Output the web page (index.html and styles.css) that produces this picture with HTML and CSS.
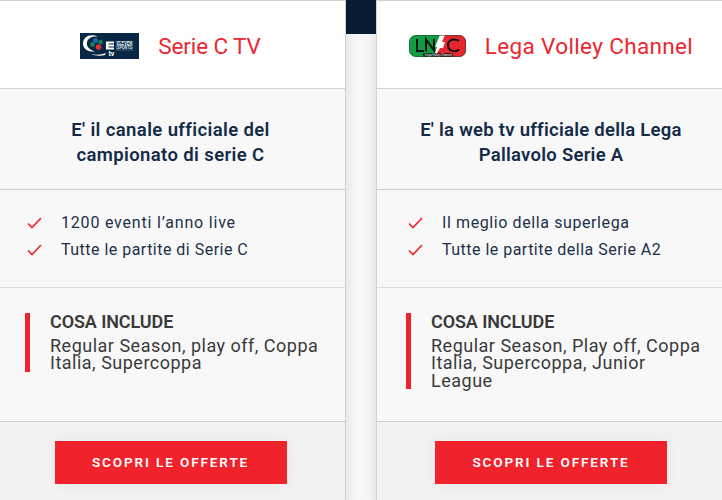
FILE: index.html
```html
<!DOCTYPE html>
<html lang="it">
<head>
  <meta charset="UTF-8">
  <meta name="viewport" content="width=device-width, initial-scale=1.0">
  <title>Offerte</title>
  <link rel="stylesheet" href="styles.css">
</head>
<body>
  <div class="cards">
    <div class="card">
      <div class="card-header">
        <svg class="logo-eleven" width="59" height="26" viewBox="0 0 59 26">
          <rect width="59" height="26" fill="#082744"/>
          <path d="M18 3.500C10 0 3 4 3 10.500c0 5 4 8.500 12 8C9 16.500 6 13 7 9c1-4 5-6 11-5.500z" fill="#fff"/>
          <path d="M11 21c5 1 10 1 15-1l-1 2c-4 1-10 1-14-1z" fill="#fff"/>
          <circle cx="12.500" cy="11.500" r="2.400" fill="#168553"/>
          <circle cx="15.500" cy="7.500" r="2.500" fill="#2467b1"/>
          <circle cx="20.500" cy="9" r="2.200" fill="#168553"/>
          <circle cx="18.500" cy="14" r="2.800" fill="#e52f3c"/>
          <path d="M26 8.500h8v8h-8z" fill="#fff"/>
          <path d="M28.500 11h5.500M28.500 14h5.500" stroke="#082744" stroke-width="1.200"/>
          <rect x="36.500" y="8.500" width="16" height="8.500" fill="none" stroke="#8798a8" stroke-width=".5"/>
          <text x="37" y="12.300" class="logo-small" textLength="15" lengthAdjust="spacingAndGlyphs">ELEVEN</text>
          <text x="37" y="16.300" class="logo-small" textLength="15" lengthAdjust="spacingAndGlyphs">SPORTS</text>
          <text x="28.500" y="23" class="logo-tv">tv</text>
        </svg>
        <h2>Serie C TV</h2>
      </div>
      <div class="card-title">
        <h3>E' il canale ufficiale del<br>campionato di serie C</h3>
      </div>
      <ul class="features">
        <li><svg width="15" height="12" viewBox="0 0 15 12"><path d="M1 6.500l4 4L14 1"/></svg><span class="events">1200 eventi l’anno live</span></li>
        <li><svg width="15" height="12" viewBox="0 0 15 12"><path d="M1 6.500l4 4L14 1"/></svg><span>Tutte le partite di Serie C</span></li>
      </ul>
      <div class="include">
        <div class="include-box">
          <h4>COSA INCLUDE</h4>
          <p>Regular Season, play off, Coppa<br>Italia, Supercoppa</p>
        </div>
      </div>
      <div class="card-footer">
        <a class="btn">SCOPRI LE OFFERTE</a>
      </div>
    </div>

    <div class="card volley">
      <div class="card-header">
        <svg class="logo-volley" width="57" height="22" viewBox="0 0 57 22">
          <defs>
            <clipPath id="pill"><rect width="57" height="22" rx="7"/></clipPath>
          </defs>
          <g clip-path="url(#pill)">
            <rect width="57" height="22" fill="#149b45"/>
            <path d="M33 0h24v22H26z" fill="#e7252e"/>
            <path d="M31 0h5l-3 7h3l-2 6h-3l-3 5h-2l2-6h-2z" fill="#fff"/>
            <path d="M14 18h30v4H14z" fill="#111" opacity=".75"/>
            <rect x=".5" y=".5" width="56" height="21" rx="6.500" fill="none" stroke="#174725" opacity=".5"/>
          </g>
          <path d="M8 4v12h7M17 16.500V4.500l8 11V4M50 6c-3-2.500-11-2.500-11 4.200s8 7 11 4.300" fill="none" stroke="#111" stroke-width="2"/>
          <text x="16" y="20.800" class="logo-caption" textLength="27" lengthAdjust="spacingAndGlyphs">Lega Volley Channel</text>
        </svg>
        <h2>Lega Volley Channel</h2>
      </div>
      <div class="card-title">
        <h3>E' la web tv ufficiale della Lega<br>Pallavolo Serie A</h3>
      </div>
      <ul class="features">
        <li><svg width="15" height="12" viewBox="0 0 15 12"><path d="M1 6.500l4 4L14 1"/></svg><span class="best">Il meglio della superlega</span></li>
        <li><svg width="15" height="12" viewBox="0 0 15 12"><path d="M1 6.500l4 4L14 1"/></svg><span>Tutte le partite della Serie A2</span></li>
      </ul>
      <div class="include">
        <div class="include-box">
          <h4>COSA INCLUDE</h4>
          <p>Regular Season, Play off, Coppa<br>Italia, Supercoppa, Junior<br>League</p>
        </div>
      </div>
      <div class="card-footer">
        <a class="btn">SCOPRI LE OFFERTE</a>
      </div>
    </div>
  </div>
</body>
</html>
```
FILE: styles.css
```css
* {
  box-sizing: border-box;
}

body {
  margin: 0;
  height: 500px;
  overflow: hidden;
  background: linear-gradient(#0a1c32 34px, #f7f7f7 34px);
  font-family: Roboto, "Noto Sans", sans-serif;
  color: #3a3a3a;
}

h2, h3, h4, p, ul {
  margin: 0;
  padding: 0;
}

.cards {
  display: grid;
  grid-template-columns: 351px 350px;
  gap: 30px;
  margin-left: -5px;
}

.card {
  height: 510px;
  background: #f8f8f8;
  border: 1px solid #d2d2d2;
  box-shadow: 0 0 12px rgba(0, 0, 0, 0.12);
  white-space: nowrap;
}

.card-header {
  height: 88px;
  display: flex;
  align-items: center;
  justify-content: center;
  gap: 19px;
  padding-top: 3px;
  background: #fff;
  border-bottom: 1px solid #d2d2d2;
}

.card-header h2 {
  color: #ee2631;
  font-size: 22.5px;
  font-weight: 400;
  line-height: 30px;
  letter-spacing: -0.1px;
}

.volley .card-header h2 {
  letter-spacing: 0.35px;
}

.logo-small {
  font-size: 4.5px;
  font-weight: 700;
  fill: #dfe5ea;
}

.logo-tv {
  font-size: 7px;
  font-weight: 700;
  fill: #fff;
}

.logo-caption {
  font-size: 3.5px;
  fill: #eee;
}

.card-title {
  height: 101px;
  padding-top: 29px;
  text-align: center;
  border-bottom: 1px solid #ccc;
}

.card-title h3 {
  color: #142b48;
  font-size: 18.5px;
  font-weight: 600;
  line-height: 25px;
  letter-spacing: 0.38px;
}

.volley .card-title h3 {
  letter-spacing: 0.26px;
}

.features {
  height: 98px;
  padding: 19px 0 0 31px;
  list-style: none;
  border-bottom: 1px solid #ddd;
}

.features li {
  display: flex;
  align-items: center;
  height: 27px;
  gap: 19px;
  color: #1c304a;
  font-size: 16px;
  letter-spacing: 0.48px;
}

.features .events {
  letter-spacing: 0.8px;
}

.features .best {
  letter-spacing: 0.6px;
}

.features svg {
  margin-top: 1px;
  fill: none;
  stroke: #ee2631;
  stroke-width: 1.7;
}

.include {
  height: 134px;
  padding: 25px 0 0 29px;
  border-bottom: 1px solid #ccc;
}

.include-box {
  border-left: 5px solid #f0222c;
  padding-left: 20px;
}

.include-box h4 {
  font-size: 18px;
  font-weight: 600;
  line-height: 18px;
  letter-spacing: -0.1px;
  padding-bottom: 6px;
}

.include-box p {
  font-size: 18px;
  line-height: 17.3px;
  letter-spacing: 0.5px;
}

.card-footer {
  height: 88px;
  padding-top: 19px;
  display: flex;
  justify-content: center;
  align-items: flex-start;
  background: #f2f2f2;
}

.btn {
  width: 232px;
  height: 43px;
  line-height: 42px;
  text-align: center;
  background: #f0222c;
  color: #fff;
  font-size: 13.5px;
  font-weight: 600;
  letter-spacing: 1.9px;
  box-shadow: 0 0 14px rgba(0, 0, 0, 0.06);
}
```
